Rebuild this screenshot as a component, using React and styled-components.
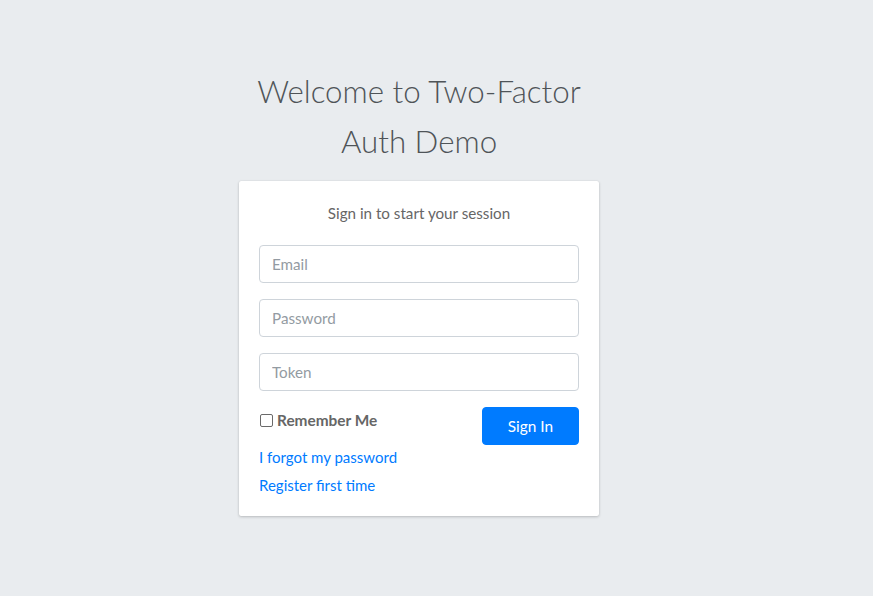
import React from "react";
import styled, { createGlobalStyle } from "styled-components";

const Global = createGlobalStyle`
  html, body { margin: 0; padding: 0; }
  body {
    background: #e9ecef;
    font-family: "Lato", "Open Sans", sans-serif;
    font-size: 16px;
    color: #212529;
  }
  * { box-sizing: border-box; }
`;

const Page = styled.div`
  min-height: 596px;
  display: flex;
  flex-direction: column;
  align-items: center;
  padding: 66px 35px 0 0;
`;

const LoginBox = styled.div`
  width: 360px;
`;

const Logo = styled.div`
  font-size: 31.3px;
  font-weight: 300;
  line-height: 50.4px;
  color: #4f5458;
  text-align: center;
  margin-bottom: 14.4px;
`;

const Card = styled.div`
  background: #fff;
  border-radius: 2px;
  box-shadow: 0 0 1px rgba(0, 0, 0, 0.125), 0 1px 3px rgba(0, 0, 0, 0.2);
  padding: 20px 20px 19px;
  color: #666;
`;

const Message = styled.p`
  margin: 0;
  padding: 0 20px 20px;
  text-align: center;
  font-size: 15.2px;
  line-height: 24px;
`;

const Input = styled.input`
  display: block;
  width: 100%;
  height: 38px;
  margin: 0 0 16px;
  padding: 6px 12px;
  font-family: inherit;
  font-size: 15.2px;
  color: #495057;
  background: #fff;
  border: 1px solid #ced4da;
  border-radius: 4px;
  outline: none;
  &::placeholder { color: #939ba2; }
`;

const Row = styled.div`
  display: flex;
  align-items: flex-start;
  justify-content: space-between;
`;

const CheckLabel = styled.label`
  display: flex;
  align-items: center;
  gap: 4px;
  font-weight: 700;
  font-size: 15.4px;
  line-height: 24px;
  color: #666;
  margin-top: 1px;
  margin-left: 1px;
`;

const Check = styled.span`
  width: 13px;
  height: 13px;
  border: 1.5px solid #6a6a6a;
  border-radius: 2px;
  background: #fff;
`;

const Button = styled.button`
  width: 97px;
  height: 38px;
  background: #007bff;
  color: #fff;
  border: 1px solid #007bff;
  border-radius: 4px;
  font-family: inherit;
  font-size: 15.4px;
  line-height: 24px;
  cursor: pointer;
`;

const LinkLine = styled.p`
  margin: 0 0 ${(p) => (p.$last ? "0" : "4px")};
  line-height: 24px;
  font-size: 15px;
  & a { color: #007bff; text-decoration: none; }
`;

export default function App() {
  return (
    <>
      <Global />
      <Page>
        <LoginBox>
          <Logo>
            Welcome to Two-Factor
            <br />
            Auth Demo
          </Logo>
          <Card>
            <Message>Sign in to start your session</Message>
            <Input type="email" placeholder="Email" />
            <Input type="password" placeholder="Password" />
            <Input type="text" placeholder="Token" />
            <Row>
              <CheckLabel>
                <Check />
                Remember Me
              </CheckLabel>
              <Button type="submit">Sign In</Button>
            </Row>
            <LinkLine>
              <a href="#">I forgot my password</a>
            </LinkLine>
            <LinkLine $last>
              <a href="#">Register first time</a>
            </LinkLine>
          </Card>
        </LoginBox>
      </Page>
    </>
  );
}
